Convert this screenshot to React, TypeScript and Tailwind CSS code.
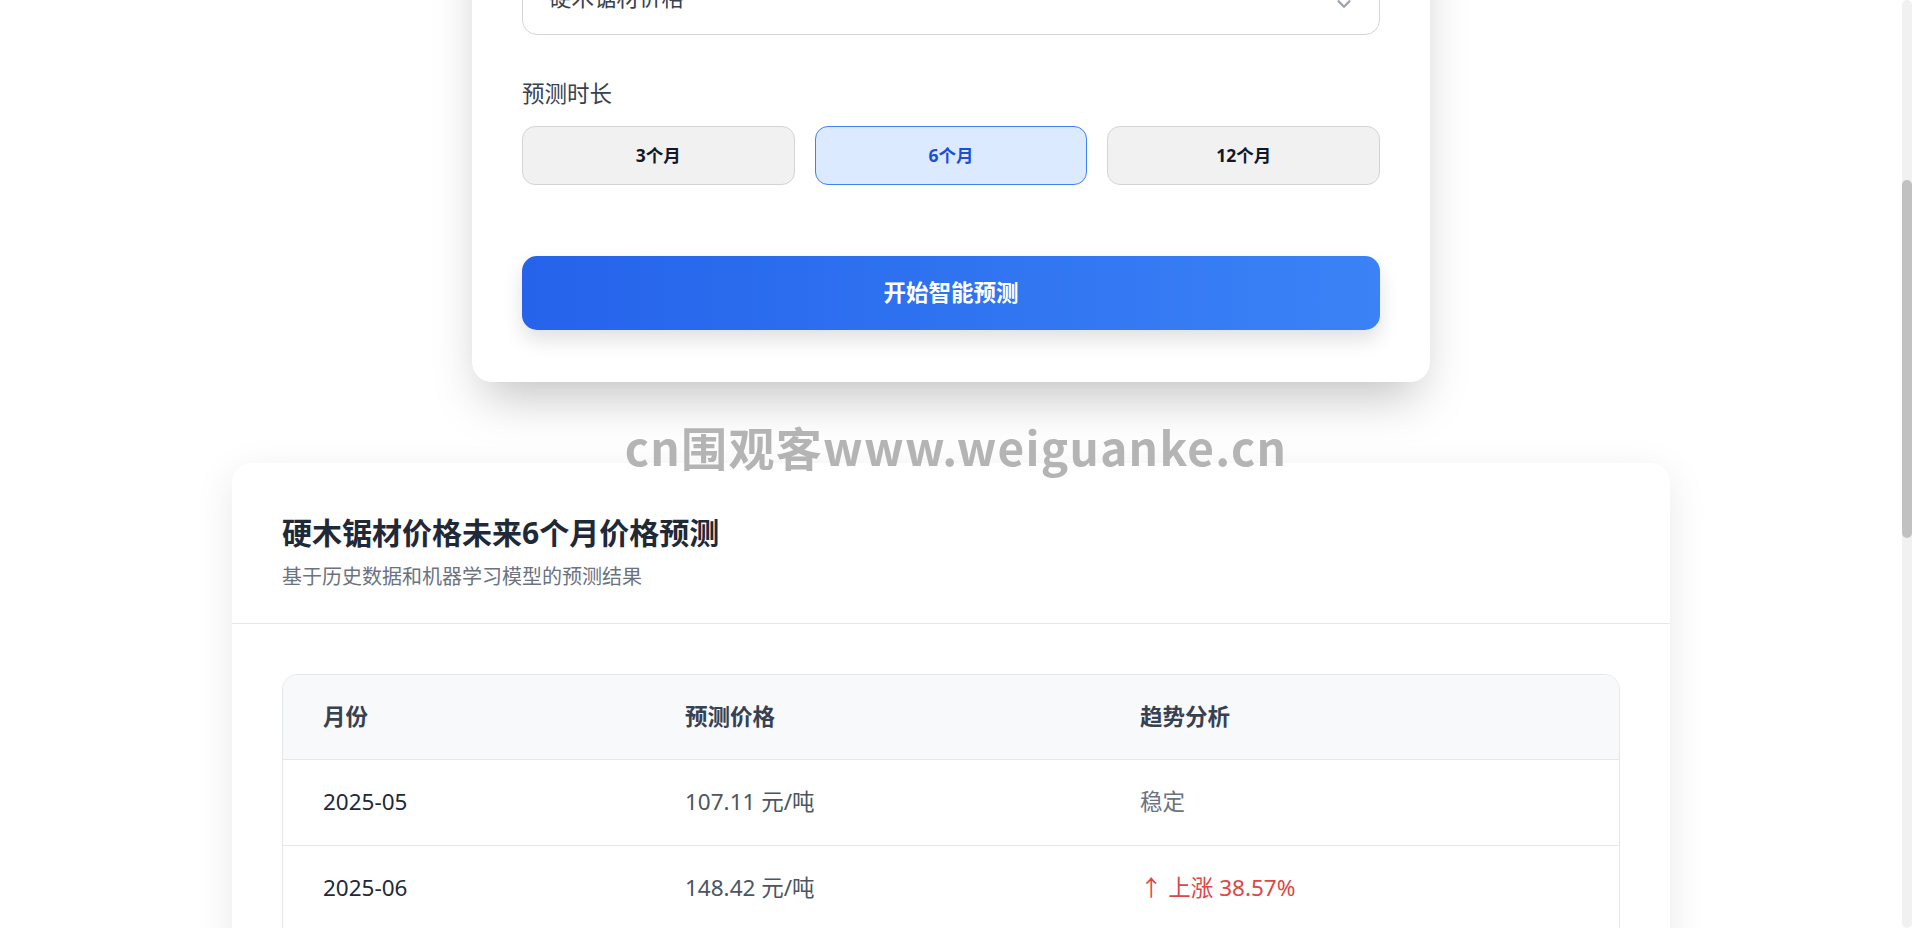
import React, { useLayoutEffect, useRef, useState } from 'react';
import { ChevronDown } from 'lucide-react';

const font = { fontFamily: '"Noto Sans", "Noto Sans CJK SC", sans-serif' };

const rows = [
  { month: '2025-05', price: '107.11', trend: 'flat', pct: '' },
  { month: '2025-06', price: '148.42', trend: 'up', pct: '38.57%' },
  { month: '2025-07', price: '139.60', trend: 'down', pct: '5.94%' },
  { month: '2025-08', price: '152.18', trend: 'up', pct: '9.01%' },
  { month: '2025-09', price: '150.73', trend: 'flat', pct: '' },
  { month: '2025-10', price: '163.25', trend: 'up', pct: '8.31%' },
];

const periods = ['3个月', '6个月', '12个月'];

function Trend({ trend, pct }: { trend: string; pct: string }) {
  if (trend === 'up') return <span className="text-[#dc4646]">↑ 上涨 {pct}</span>;
  if (trend === 'down') return <span className="text-[#16a34a]">↓ 下跌 {pct}</span>;
  return <span className="text-[#6b7280]">稳定</span>;
}

export default function App() {
  const scrollRef = useRef<HTMLDivElement>(null);
  const selectRef = useRef<HTMLDivElement>(null);
  const [period, setPeriod] = useState('6个月');

  useLayoutEffect(() => {
    const box = scrollRef.current;
    const sel = selectRef.current;
    if (!box || !sel) return;
    box.scrollTop += sel.getBoundingClientRect().bottom - box.getBoundingClientRect().top - 35;
  }, []);

  return (
    <div
      ref={scrollRef}
      style={font}
      className="h-screen overflow-y-scroll pr-[10px] bg-white text-[#1f2937] [scrollbar-width:none]"
    >
      <nav className="h-[90px] border-b border-[#e5e7eb] flex items-center px-[60px] text-[24px] font-bold text-[#2563eb]">
        木材价格预测平台
      </nav>

      <main className="pt-[70px] pb-[100px] flex flex-col items-center">
        <header className="text-center mb-[74px]">
          <h1 className="text-[40px] leading-[52px] font-bold text-[#1f2937]">木材价格智能预测</h1>
          <p className="mt-[12px] text-[20px] leading-[30px] text-[#6b7280]">选择木材品类与预测时长，获取未来价格走势</p>
        </header>

        {/* form card */}
        <section className="w-[958px] bg-white rounded-[20px] px-[50px] pt-[50px] pb-[52px] shadow-[0_25px_50px_-12px_rgba(0,0,0,0.25)]">
          <label className="block text-[22.5px] leading-[34px] text-[#374151] mb-[15px]">木材类型</label>
          <div
            ref={selectRef}
            className="h-[74px] border border-[#d1d5db] rounded-[15px] flex items-center justify-between pl-[26px] pr-[24px] text-[22.5px] text-[#374151]"
          >
            <span>硬木锯材价格</span>
            <ChevronDown className="w-[22px] h-[22px] text-[#9ca3af] translate-y-[6px]" strokeWidth={2.5} />
          </div>

          <div className="mt-[42px] text-[22.5px] leading-[34px] text-[#374151] mb-[15px]">预测时长</div>
          <div className="grid grid-cols-3 gap-[20px]">
            {periods.map((p) => (
              <button
                key={p}
                onClick={() => setPeriod(p)}
                className={
                  p === period
                    ? 'h-[59px] rounded-[13px] border border-[#3b82f6] bg-[#dbeafe] text-[#1d4ed8] text-[17.5px] font-bold'
                    : 'h-[59px] rounded-[13px] border border-[#d4d4d8] bg-[#f1f1f1] text-[#111827] text-[17.5px] font-bold'
                }
              >
                {p}
              </button>
            ))}
          </div>

          <button className="mt-[71px] w-full h-[74px] rounded-[15px] bg-linear-to-r from-[#2563eb] to-[#3b82f6] text-white text-[22.5px] font-bold shadow-[0_10px_20px_rgba(0,0,0,0.12)]">
            开始智能预测
          </button>
        </section>

        {/* result card */}
        <section className="mt-[81px] w-[1438px] bg-white rounded-[20px] shadow-[0_10px_40px_rgba(0,0,0,0.09)]">
          <div className="px-[50px] pt-[50px] pb-[31px] border-b border-[#e5e7eb]">
            <h2 className="text-[30px] leading-[39px] font-bold text-[#1f2937]">硬木锯材价格未来6个月价格预测</h2>
            <p className="mt-[10px] text-[20px] leading-[30px] text-[#6b7280]">基于历史数据和机器学习模型的预测结果</p>
          </div>
          <div className="p-[50px]">
            <div className="border border-[#e5e7eb] rounded-[15px] overflow-hidden">
              <table className="w-full table-fixed text-left text-[22.5px]">
                <colgroup>
                  <col className="w-[362px]" />
                  <col className="w-[455px]" />
                  <col />
                </colgroup>
                <thead className="bg-[#f8f9fb]">
                  <tr className="h-[84px] border-b border-[#e5e7eb]">
                    <th className="pl-[40px] font-bold text-[#374151]">月份</th>
                    <th className="pl-[40px] font-bold text-[#374151]">预测价格</th>
                    <th className="pl-[40px] font-bold text-[#374151]">趋势分析</th>
                  </tr>
                </thead>
                <tbody>
                  {rows.map((r, i) => (
                    <tr key={r.month} className={i < rows.length - 1 ? 'h-[86px] border-b border-[#e5e7eb]' : 'h-[86px]'}>
                      <td className="pl-[40px] text-[#1f2937]">{r.month}</td>
                      <td className="pl-[40px] text-[#4b5563]">{r.price} 元/吨</td>
                      <td className="pl-[40px]">
                        <Trend trend={r.trend} pct={r.pct} />
                      </td>
                    </tr>
                  ))}
                </tbody>
              </table>
            </div>
          </div>
        </section>

        {/* chart card */}
        <section className="mt-[60px] w-[1438px] bg-white rounded-[20px] p-[50px] shadow-[0_10px_40px_rgba(0,0,0,0.09)]">
          <h2 className="text-[30px] leading-[39px] font-bold text-[#1f2937]">价格走势</h2>
          <svg className="mt-[30px] w-full h-[280px]" viewBox="0 0 1338 280" preserveAspectRatio="none">
            <polyline
              points="40,240 290,90 540,120 790,70 1040,76 1290,30"
              fill="none"
              stroke="#3b82f6"
              strokeWidth="3"
            />
          </svg>
        </section>
      </main>

      {/* site watermark */}
      <div
        className="fixed inset-x-0 top-[418px] text-center text-[46px] leading-[56px] font-bold tracking-[1.3px] text-[#b4b4b4] pointer-events-none"
        style={{ fontFamily: '"Noto Sans CJK SC", sans-serif' }}
      >
        cn围观客www.weiguanke.cn
      </div>

      {/* scrollbar */}
      <div className="fixed right-0 inset-y-0 w-[10px] rounded-full bg-[#f1f1f1] pointer-events-none">
        <div className="mt-[180px] h-[358px] rounded-full bg-[#c1c1c1]" />
      </div>
    </div>
  );
}
